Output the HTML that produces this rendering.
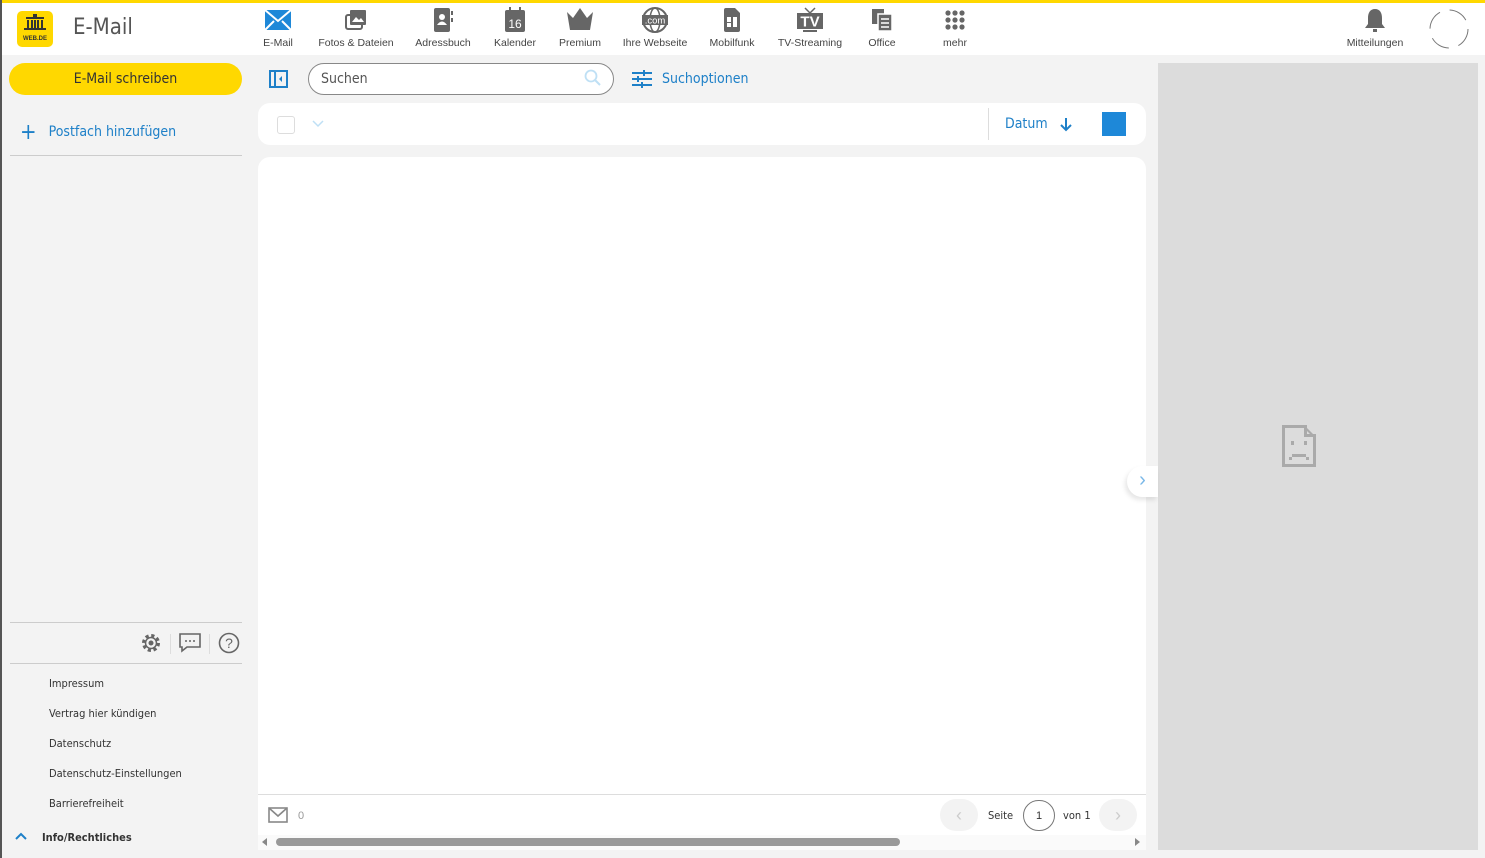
<!DOCTYPE html>
<html><head><meta charset="utf-8"><style>
*{box-sizing:border-box;margin:0;padding:0}
body{width:1485px;height:858px;overflow:hidden;background:#f3f3f3;font-family:"Liberation Sans",sans-serif;position:relative;color:#333}
.abs{position:absolute}
#top{left:0;top:0;width:1485px;height:3px;background:#ffd800}
#hdr{left:0;top:3px;width:1485px;height:52px;background:#fff}
#lb{left:0;top:0;width:2px;height:858px;background:#555}
.nav{position:absolute;top:3px;height:52px;text-align:center;font-size:10.5px;color:#444;font-family:"Liberation Sans",sans-serif}
.nav .ic{height:34px;display:flex;align-items:center;justify-content:center}
.side{font-family:"DejaVu Sans Condensed","Liberation Sans",sans-serif}
.foot{position:absolute;left:49px;font-size:11px;color:#333;font-family:"DejaVu Sans Condensed","Liberation Sans",sans-serif}
</style></head><body>
<div id="top" class="abs"></div>
<div id="hdr" class="abs"></div>
<div id="lb" class="abs"></div>
<div class="abs" style="left:17px;top:11px;width:36px;height:36px;background:#ffd800;border-radius:5px;text-align:center">
<svg width="26" height="20" viewBox="0 0 26 20" style="margin-top:3px"><rect x="11" y="0" width="4" height="3" fill="#333"/><rect x="4" y="3" width="18" height="2" fill="#333"/><rect x="5" y="6" width="2" height="8" fill="#333"/><rect x="9" y="6" width="2" height="8" fill="#333"/><rect x="12" y="6" width="2" height="8" fill="#333"/><rect x="15" y="6" width="2" height="8" fill="#333"/><rect x="19" y="6" width="2" height="8" fill="#333"/><rect x="2" y="14" width="22" height="2" fill="#333"/></svg>
<div style="font-size:6px;font-weight:bold;color:#333;margin-top:-3px">WEB.DE</div></div>
<div class="abs side" style="left:73px;top:15px;font-size:22px;color:#555">E-Mail</div>

<div class="nav" style="left:250px;width:56px"><div class="ic"><svg width="28" height="22" viewBox="0 0 28 22"><rect x="1" y="1" width="26" height="20" fill="#1e88d8"/><path d="M1 1l13 11L27 1M1 21l9-9M27 21l-9-9" stroke="#fff" stroke-width="2" fill="none"/></svg></div>E-Mail</div>
<div class="nav" style="left:312px;width:88px"><div class="ic"><svg width="24" height="22" viewBox="0 0 24 22"><rect x="2" y="6" width="16" height="14" rx="2" fill="none" stroke="#666" stroke-width="2"/><rect x="6" y="1" width="16" height="15" rx="1" fill="#666"/><path d="M8 13l4-5 3 3 2-2 3 4z" fill="#fff"/></svg></div>Fotos &amp; Dateien</div>
<div class="nav" style="left:408px;width:70px"><div class="ic"><svg width="24" height="26" viewBox="0 0 24 26"><rect x="3" y="1" width="16" height="24" rx="2" fill="#666"/><rect x="20" y="4" width="2" height="4" fill="#666"/><rect x="20" y="11" width="2" height="4" fill="#666"/><circle cx="11" cy="10" r="3" fill="#fff"/><path d="M6 18q5-7 10 0z" fill="#fff"/></svg></div>Adressbuch</div>
<div class="nav" style="left:486px;width:58px"><div class="ic"><svg width="22" height="26" viewBox="0 0 22 26"><rect x="1" y="3" width="20" height="22" rx="2" fill="#666"/><rect x="5" y="0" width="2" height="5" fill="#666"/><rect x="15" y="0" width="2" height="5" fill="#666"/><text x="11" y="21" font-size="12" fill="#fff" text-anchor="middle" font-family="Liberation Sans">16</text></svg></div>Kalender</div>
<div class="nav" style="left:552px;width:56px"><div class="ic"><svg width="28" height="26" viewBox="0 0 28 26"><path d="M1 5l6 6 7-10 7 10 6-6-3 18H4z" fill="#666"/></svg></div>Premium</div>
<div class="nav" style="left:618px;width:74px"><div class="ic"><svg width="28" height="26" viewBox="0 0 28 26"><circle cx="14" cy="13" r="12" fill="none" stroke="#666" stroke-width="2"/><ellipse cx="14" cy="13" rx="5" ry="12" fill="none" stroke="#666" stroke-width="1.5"/><rect x="1" y="8" width="26" height="10" fill="#666"/><text x="14" y="16.5" font-size="9.5" fill="#fff" text-anchor="middle" font-family="Liberation Sans">.com</text></svg></div>Ihre Webseite</div>
<div class="nav" style="left:704px;width:56px"><div class="ic"><svg width="20" height="26" viewBox="0 0 20 26"><path d="M2 3a2 2 0 012-2h9l5 5v17a2 2 0 01-2 2H4a2 2 0 01-2-2z" fill="#666"/><rect x="5" y="10" width="4" height="5" fill="#fff"/><rect x="11" y="10" width="4" height="10" fill="#fff"/><rect x="5" y="16" width="4" height="4" fill="#fff"/></svg></div>Mobilfunk</div>
<div class="nav" style="left:772px;width:76px"><div class="ic"><svg width="28" height="26" viewBox="0 0 28 26"><path d="M9 1l5 5 5-5" stroke="#666" stroke-width="1.5" fill="none"/><rect x="1" y="6" width="26" height="16" fill="#666"/><rect x="7" y="23" width="14" height="2" fill="#666"/><text x="14" y="19.5" font-size="15" font-weight="bold" fill="#fff" text-anchor="middle" font-family="Liberation Sans">TV</text></svg></div>TV-Streaming</div>
<div class="nav" style="left:856px;width:52px"><div class="ic"><svg width="24" height="26" viewBox="0 0 24 26"><rect x="2" y="2" width="12" height="15" fill="#666"/><rect x="8" y="7" width="14" height="17" fill="#666" stroke="#fff" stroke-width="1.5"/><path d="M11 12h8M11 16h8M11 20h8" stroke="#fff" stroke-width="1.5"/></svg></div>Office</div>
<div class="nav" style="left:930px;width:50px"><div class="ic"><svg width="22" height="22" viewBox="0 0 22 22" fill="#666"><circle cx="4" cy="4" r="2.6"/><circle cx="11" cy="4" r="2.6"/><circle cx="18" cy="4" r="2.6"/><circle cx="4" cy="11" r="2.6"/><circle cx="11" cy="11" r="2.6"/><circle cx="18" cy="11" r="2.6"/><circle cx="4" cy="18" r="2.6"/><circle cx="11" cy="18" r="2.6"/><circle cx="18" cy="18" r="2.6"/></svg></div>mehr</div>
<div class="nav" style="left:1340px;width:70px"><div class="ic"><svg width="24" height="26" viewBox="0 0 24 26"><path d="M12 2c-5 0-7 4-7 9v6l-3 4h20l-3-4v-6c0-5-2-9-7-9z" fill="#666"/><rect x="10" y="22" width="4" height="3" fill="#666"/></svg></div>Mitteilungen</div>
<svg class="abs" style="left:1428px;top:8px" width="42" height="42" viewBox="0 0 42 42"><circle cx="21" cy="21" r="19" fill="none" stroke="#777" stroke-width="1" stroke-dasharray="20 10"/></svg>

<div class="abs side" style="left:9px;top:63px;width:233px;height:32px;border-radius:16px;background:#ffd800;text-align:center;line-height:32px;font-size:14px;color:#333">E-Mail schreiben</div>
<div class="abs side" style="left:20px;top:120px;font-size:14px;color:#1e80c8"><span style="font-size:22px;vertical-align:-3px;margin-right:12px">+</span>Postfach hinzufügen</div>
<div class="abs" style="left:10px;top:155px;width:232px;height:1px;background:#ccc"></div>
<div class="abs" style="left:10px;top:622px;width:232px;height:1px;background:#ccc"></div>
<div class="abs" style="left:10px;top:663px;width:232px;height:1px;background:#ccc"></div>
<svg class="abs" style="left:140px;top:632px" width="22" height="22" viewBox="0 0 22 22"><circle cx="11" cy="11" r="7" fill="none" stroke="#666" stroke-width="4" stroke-dasharray="3 2.5"/><circle cx="11" cy="11" r="5.5" fill="none" stroke="#666" stroke-width="1.5"/><circle cx="11" cy="11" r="2.5" fill="#666"/></svg>
<div class="abs" style="left:170px;top:634px;width:1px;height:20px;background:#ddd"></div>
<svg class="abs" style="left:179px;top:633px" width="22" height="20" viewBox="0 0 22 20"><path d="M1 1h20v13H8l-5 4v-4H1z" fill="none" stroke="#666" stroke-width="1.6"/><circle cx="7" cy="8" r="1" fill="#666"/><circle cx="11" cy="8" r="1" fill="#666"/><circle cx="15" cy="8" r="1" fill="#666"/></svg>
<div class="abs" style="left:209px;top:634px;width:1px;height:20px;background:#ddd"></div>
<svg class="abs" style="left:218px;top:632px" width="22" height="22" viewBox="0 0 22 22"><circle cx="11" cy="11" r="9.5" fill="none" stroke="#666" stroke-width="1.6"/><text x="11" y="16" font-size="14" fill="#666" text-anchor="middle" font-family="Liberation Sans">?</text></svg>
<div class="foot" style="top:677px">Impressum</div>
<div class="foot" style="top:707px">Vertrag hier kündigen</div>
<div class="foot" style="top:737px">Datenschutz</div>
<div class="foot" style="top:767px">Datenschutz-Einstellungen</div>
<div class="foot" style="top:797px">Barrierefreiheit</div>
<svg class="abs" style="left:15px;top:832px" width="12" height="8" viewBox="0 0 12 8"><path d="M1 7l5-5 5 5" stroke="#1e80c8" stroke-width="2" fill="none"/></svg>
<div class="foot" style="left:42px;top:831px;font-weight:bold">Info/Rechtliches</div>

<svg class="abs" style="left:269px;top:70px" width="19" height="18" viewBox="0 0 19 18"><rect x="1" y="1" width="17" height="16" fill="none" stroke="#1e80c8" stroke-width="2"/><rect x="5" y="1" width="2" height="16" fill="#1e80c8"/><path d="M13 6l-3 3 3 3z" fill="#1e80c8"/></svg>
<div class="abs side" style="left:308px;top:63px;width:306px;height:32px;border:1px solid #888;border-radius:16px;background:#fff;font-size:14px;color:#555;padding:7px 12px">Suchen</div>
<svg class="abs" style="left:584px;top:69px" width="18" height="18" viewBox="0 0 18 18"><circle cx="7" cy="7" r="5.5" fill="none" stroke="#bfe0f5" stroke-width="1.8"/><path d="M11 11l5 5" stroke="#bfe0f5" stroke-width="2"/></svg>
<svg class="abs" style="left:632px;top:70px" width="20" height="18" viewBox="0 0 20 18" stroke="#1e80c8" stroke-width="2"><path d="M0 3h20M0 9h20M0 15h20"/><path d="M12 0v6M6 6v6M10 12v6"/></svg>
<div class="abs side" style="left:662px;top:71px;font-size:14px;color:#1e80c8">Suchoptionen</div>

<div class="abs" style="left:258px;top:103px;width:888px;height:42px;background:#fff;border-radius:12px"></div>
<div class="abs" style="left:277px;top:116px;width:18px;height:18px;border:1px solid #ddd;border-radius:3px"></div>
<svg class="abs" style="left:312px;top:120px" width="12" height="8" viewBox="0 0 12 8"><path d="M1 1l5 5 5-5" stroke="#bfe0f5" stroke-width="1.5" fill="none"/></svg>
<div class="abs" style="left:988px;top:108px;width:1px;height:32px;background:#ddd"></div>
<div class="abs side" style="left:1005px;top:116px;font-size:14px;color:#1e80c8">Datum</div>
<svg class="abs" style="left:1059px;top:117px" width="14" height="15" viewBox="0 0 14 15"><path d="M7 1v12M2 8l5 5 5-5" stroke="#1e80c8" stroke-width="2" fill="none"/></svg>
<div class="abs" style="left:1102px;top:112px;width:24px;height:24px;background:#1e88d8"></div>

<div class="abs" style="left:258px;top:157px;width:888px;height:693px;background:#fff;border-radius:12px 12px 0 0"></div>
<div class="abs" style="left:258px;top:794px;width:888px;height:1px;background:#ddd"></div>
<svg class="abs" style="left:268px;top:807px" width="20" height="16" viewBox="0 0 20 16"><rect x="1" y="1" width="18" height="14" fill="none" stroke="#888" stroke-width="1.6"/><path d="M1 1l9 8 9-8" stroke="#888" stroke-width="1.6" fill="none"/></svg>
<div class="abs" style="left:298px;top:810px;font-size:11px;color:#999">0</div>
<div class="abs" style="left:940px;top:799px;width:38px;height:32px;border-radius:16px;background:#f3f3f3;text-align:center;line-height:32px;color:#ccc;font-size:18px">&lsaquo;</div>
<div class="abs side" style="left:988px;top:809px;font-size:11px;color:#333">Seite</div>
<div class="abs" style="left:1023px;top:800px;width:32px;height:31px;border:1px solid #777;border-radius:16px;text-align:center;line-height:30px;font-size:11px">1</div>
<div class="abs side" style="left:1063px;top:809px;font-size:11px;color:#333">von 1</div>
<div class="abs" style="left:1099px;top:799px;width:38px;height:32px;border-radius:16px;background:#f3f3f3;text-align:center;line-height:32px;color:#ccc;font-size:18px">&rsaquo;</div>
<div class="abs" style="left:258px;top:835px;width:888px;height:15px;background:#fafafa"></div>
<div class="abs" style="left:262px;top:838px;width:0;height:0;border:4px solid transparent;border-right:5px solid #888;border-left:none"></div>
<div class="abs" style="left:276px;top:838px;width:624px;height:8px;border-radius:4px;background:#999"></div>
<div class="abs" style="left:1135px;top:838px;width:0;height:0;border:4px solid transparent;border-left:5px solid #888;border-right:none"></div>

<div class="abs" style="left:1158px;top:63px;width:320px;height:787px;background:#dcdcdc"></div>
<div class="abs" style="left:1127px;top:466px;width:31px;height:31px;border-radius:16px 0 0 16px;background:#fff;box-shadow:-2px 3px 5px rgba(0,0,0,.1);color:#7ab8e8;font-size:20px;line-height:29px;text-align:center">&rsaquo;</div>
<svg class="abs" style="left:1282px;top:425px" width="34" height="42" viewBox="0 0 34 42" fill="#aaa"><path d="M0 0h22v3H3v36h28V12h3v30H0z"/><path d="M22 0l12 12h-3L22 3z"/><path d="M22 0v12h12v-3h-9V0z"/><rect x="9" y="16" width="3" height="4"/><rect x="22" y="16" width="3" height="4"/><rect x="10" y="29" width="14" height="3"/><rect x="7" y="32" width="3" height="3"/><rect x="24" y="32" width="3" height="3"/></svg>
</body></html>
